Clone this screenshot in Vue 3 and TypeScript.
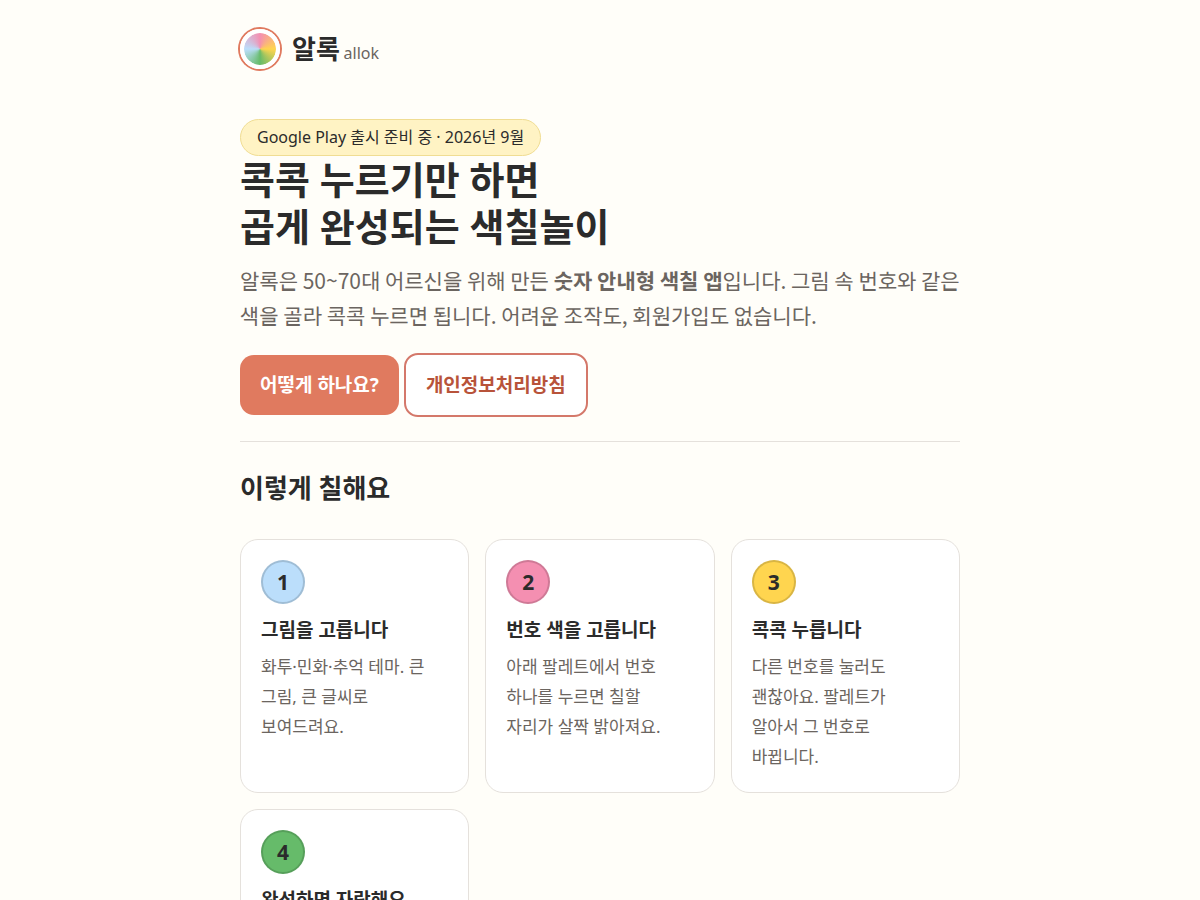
<script setup lang="ts">
interface Step {
  title: string
  text: string
  tone: string
}

const steps: Step[] = [
  { title: '그림을 고릅니다', text: '화투·민화·추억 테마. 큰 그림, 큰 글씨로 보여드려요.', tone: 'blue' },
  { title: '번호 색을 고릅니다', text: '아래 팔레트에서 번호 하나를 누르면 칠할 자리가 살짝 밝아져요.', tone: 'pink' },
  { title: '콕콕 누릅니다', text: '다른 번호를 눌러도 괜찮아요. 팔레트가 알아서 그 번호로 바뀝니다.', tone: 'yellow' },
  { title: '완성하면 자랑해요', text: '완성한 그림을 가족과 친구에게 보여주세요.', tone: 'green' },
]
</script>

<template>
  <div class="page">
    <header class="brand">
      <span class="mark" aria-hidden="true"></span>
      <span class="name">알록 <small>allok</small></span>
    </header>
    <main>
      <section class="hero">
        <span class="pill">Google Play 출시 준비 중 · 2026년 9월</span>
        <h1>콕콕 누르기만 하면<br />곱게 완성되는 색칠놀이</h1>
        <p class="lead">
          알록은 50~70대 어르신을 위해 만든 <strong>숫자 안내형 색칠 앱</strong>입니다. 그림 속 번호와 같은 색을 골라 콕콕 누르면 됩니다. 어려운 조작도, 회원가입도 없습니다.
        </p>
        <nav class="actions">
          <a class="btn primary" href="#how">어떻게 하나요?</a>
          <a class="btn outline" href="#privacy">개인정보처리방침</a>
        </nav>
      </section>
      <section id="how" class="how">
        <h2>이렇게 칠해요</h2>
        <div class="steps">
          <article v-for="(step, i) in steps" :key="step.title" class="card">
            <div class="num" :class="step.tone">{{ i + 1 }}</div>
            <h3>{{ step.title }}</h3>
            <p>{{ step.text }}</p>
          </article>
        </div>
      </section>
    </main>
  </div>
</template>

<style>
body {
  margin: 0;
  background: #fffef9;
}
html {
  scrollbar-width: none;
}
</style>

<style scoped>
.page {
  box-sizing: border-box;
  max-width: 760px;
  margin: 0 auto;
  padding: 28px 20px 60px;
  color: #2b2b2b;
  font-family: "Noto Sans", "Noto Sans CJK KR", sans-serif;
  font-size: 20px;
  line-height: 1.75;
  word-break: keep-all;
}
.brand {
  display: flex;
  align-items: center;
  gap: 12px;
}
.mark {
  box-sizing: border-box;
  width: 40px;
  height: 40px;
  border: 4px solid #fff;
  border-radius: 50%;
  background: conic-gradient(#f48fb1, #ffd54f, #66bb6a, #bbdefb, #f48fb1) padding-box;
  box-shadow: 0 0 0 2px #e07a5f;
}
.name {
  font-size: 26px;
  font-weight: 700;
  line-height: 42px;
}
.name small {
  margin-left: -3px;
  font-size: 16px;
  font-weight: 400;
  line-height: 1;
  color: #6b6560;
}
.hero {
  padding: 49px 0 24px;
  border-bottom: 1px solid #e5e1dc;
}
.pill {
  display: table;
  padding: 4px 16px;
  border: 1px solid #f0dd93;
  border-radius: 999px;
  background: #fff3c4;
  font-size: 16px;
  line-height: 27px;
}
h1 {
  margin: 0 0 13px;
  font-size: 38px;
  line-height: 47px;
}
.lead {
  margin: 0 0 20px;
  color: #6b6560;
  font-family: "Noto Sans KR", "Noto Sans", system-ui, "Noto Sans CJK KR", sans-serif;
  font-size: 21px;
  line-height: 35px;
}
.actions {
  display: flex;
  flex-wrap: wrap;
  align-items: center;
  gap: 5px;
}
.btn {
  padding: 14px 20px;
  border-radius: 14px;
  font-size: 19px;
  font-weight: 700;
  line-height: 32px;
  text-decoration: none;
}
.primary {
  background: #e07a5f;
  color: #fff;
}
.outline {
  border: 2px solid #d4786a;
  background: #fff;
  color: #b8533a;
}
h2 {
  margin: 24px 0 28px;
  font-size: 26px;
  line-height: 45px;
}
.steps {
  display: grid;
  grid-template-columns: repeat(auto-fit, minmax(220px, 1fr));
  gap: 16px;
}
.card {
  padding: 20px;
  border: 1px solid #e5e1dc;
  border-radius: 18px;
  background: #fff;
}
.num {
  box-sizing: border-box;
  display: flex;
  align-items: center;
  justify-content: center;
  width: 44px;
  height: 44px;
  border: 2px solid rgba(0, 0, 0, 0.15);
  border-radius: 50%;
  font-size: 21px;
  font-weight: 700;
}
.blue {
  background: #bbdefb;
}
.pink {
  background: #f48fb1;
}
.yellow {
  background: #ffd54f;
}
.green {
  background: #66bb6a;
}
h3 {
  margin: 10px 0 5px;
  font-size: 19px;
  line-height: 33px;
}
.card p {
  margin: 0;
  padding-right: 8px;
  font-size: 17px;
  line-height: 30px;
  color: #6b6560;
}
</style>
